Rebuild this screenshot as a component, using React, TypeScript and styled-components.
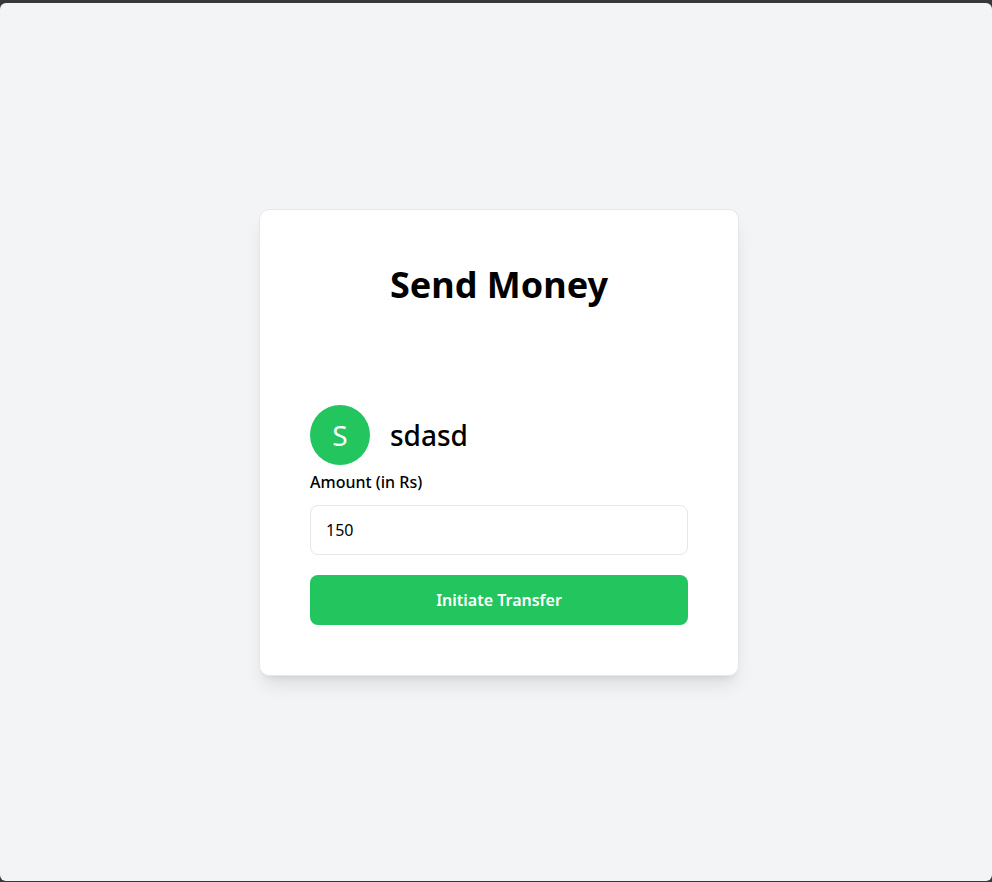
import styled, { createGlobalStyle } from 'styled-components'

const GlobalStyle = createGlobalStyle`
  html, body {
    margin: 0;
    padding: 0;
    background: #383838;
  }
  body {
    font-family: 'Noto Sans', 'Open Sans', Arial, sans-serif;
  }
  * {
    box-sizing: border-box;
  }
`

function App() {
  return (
    <>
      <GlobalStyle />
      <Window>
        <Card>
          <Header>
            <Title>Send Money</Title>
          </Header>
          <Body>
            <Recipient>
              <Avatar>
                <Initial>S</Initial>
              </Avatar>
              <Name>sdasd</Name>
            </Recipient>
            <Field>
              <Label htmlFor='amount'>Amount (in Rs)</Label>
              <Input id='amount' type='number' defaultValue={150} placeholder='Enter amount' />
            </Field>
            <TransferButton>Initiate Transfer</TransferButton>
          </Body>
        </Card>
      </Window>
    </>
  )
}

const Window = styled.div`
  margin-top: 3px;
  height: 878px;
  background: #f3f4f6;
  border-radius: 6px;
  display: flex;
  justify-content: center;
  align-items: center;
  padding-left: 6px;
`

const Card = styled.div`
  width: 480px;
  padding: 20px;
  background: #fff;
  border: 1px solid #e5e7eb;
  border-radius: 10px;
  box-shadow: 0 12px 18px -4px rgba(0, 0, 0, 0.1), 0 5px 7px -5px rgba(0, 0, 0, 0.1);
  display: flex;
  flex-direction: column;
  gap: 40px;
`

const Header = styled.div`
  padding: 32px 30px 28px;
`

const Title = styled.h2`
  margin: 0;
  font-size: 36px;
  line-height: 45px;
  font-weight: 700;
  color: #000;
  text-align: center;
`

const Body = styled.div`
  padding: 30px;
  display: flex;
  flex-direction: column;
`

const Recipient = styled.div`
  display: flex;
  align-items: center;
  gap: 20px;
`

const Avatar = styled.div`
  width: 60px;
  height: 60px;
  border-radius: 50%;
  background: #22c55e;
  display: flex;
  align-items: center;
  justify-content: center;
`

const Initial = styled.span`
  font-size: 28px;
  color: #fff;
`

const Name = styled.h3`
  margin: 0;
  font-size: 28px;
  font-weight: 500;
  color: #000;
`

const Field = styled.div`
  display: flex;
  flex-direction: column;
  gap: 10px;
  margin-top: 5px;
`

const Label = styled.label`
  font-size: 16px;
  line-height: 25px;
  font-weight: 500;
  color: #000;
`

const Input = styled.input`
  height: 50px;
  width: 100%;
  border: 1px solid #e5e7eb;
  border-radius: 8px;
  padding: 0 15px;
  font-family: inherit;
  font-size: 16px;
  color: #000;
  background: #fff;
  outline: none;
  appearance: textfield;
  &::-webkit-inner-spin-button,
  &::-webkit-outer-spin-button {
    -webkit-appearance: none;
    margin: 0;
  }
`

const TransferButton = styled.button`
  margin-top: 20px;
  height: 50px;
  width: 100%;
  border: none;
  border-radius: 8px;
  background: #22c55e;
  color: #fff;
  font-family: inherit;
  font-size: 16px;
  font-weight: 600;
  cursor: pointer;
`

export default App
